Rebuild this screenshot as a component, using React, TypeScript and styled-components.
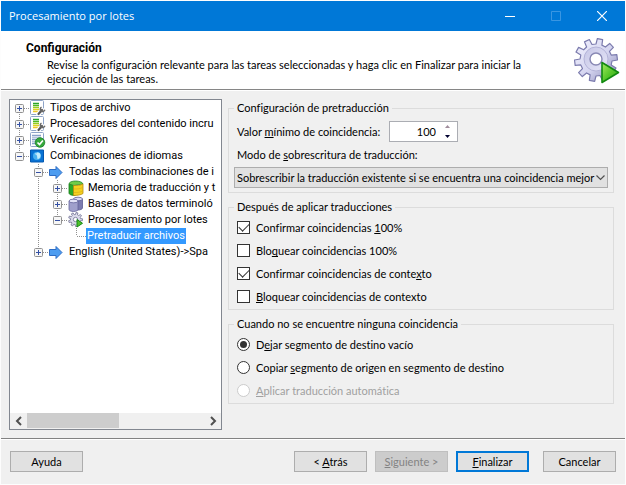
import React from "react";
import styled, { createGlobalStyle, css } from "styled-components";

const GlobalStyle = createGlobalStyle`
  * { box-sizing: border-box; }
  html, body { margin: 0; background: #fdfdfd; }
  body, button, input, select {
    font-family: Lato, "Liberation Sans", sans-serif;
    font-size: 11px;
    font-variant-ligatures: none;
    color: #000;
  }
  u { text-decoration-skip-ink: none; }
`;

const Window = styled.main`
  display: flex;
  flex-direction: column;
  min-height: 100vh;
  padding: 1px;
`;

const TitleBar = styled.header`
  display: flex;
  align-items: center;
  height: 30px;
  padding-left: 8px;
  background: #0078d7;
  color: #fff;
`;

const Title = styled.h1`
  flex: 1;
  margin: 0;
  font: 400 11px/16px "Open Sans", "Noto Sans", sans-serif;
`;

const CaptionButton = styled.button`
  display: grid;
  place-items: center;
  width: 46px;
  height: 30px;
  padding: 0;
  border: 0;
  background: transparent;
  color: #fff;

  &:disabled { color: #3a96e2; }
`;

const Banner = styled.section`
  display: flex;
  justify-content: space-between;
  height: 59px;
  padding: 7px 5px 0 25px;
  background: #fff;
  border-bottom: 1px solid #868686;
`;

const BannerText = styled.div`
  padding-top: 3px;
`;

const BannerTitle = styled.h2`
  margin: 0 0 3px;
  font: 700 12px/14px Roboto, "Liberation Sans", sans-serif;
`;

const BannerNote = styled.p`
  max-width: 510px;
  margin: 0;
  padding-left: 21px;
  line-height: 14px;
`;

const Content = styled.div`
  display: grid;
  grid-template-columns: 213px minmax(0, 1fr);
  flex: 1;
  gap: 6px;
  padding: 8px 11px 8px 8px;
  background: #f0f0f0;
  border-top: 1px solid #fff;
`;

const TreePanel = styled.nav`
  display: flex;
  flex-direction: column;
  overflow: hidden;
  border: 1px solid #828790;
  background: #fff;
`;

const TreeList = styled.ul`
  flex: 1;
  margin: 0;
  padding: 0;
  list-style: none;
  font-family: Roboto, "Liberation Sans", sans-serif;
`;

const TreeRow = styled.li`
  display: flex;
  align-items: center;
  height: 16px;
  white-space: nowrap;
`;

const TreeIcon = styled.svg`
  flex: none;
  width: 16px;
  height: 16px;
  margin: 0 3px 0 1px;
`;

const TreeLabel = styled.span<{ $selected?: boolean }>`
  padding: 0 1px;
  line-height: 16px;
  ${(p) =>
    p.$selected &&
    css`
      background: #3399ff;
      color: #fff;
    `}
`;

const GuideCell = styled.svg`
  flex: none;
  width: 19px;
  height: 16px;
`;

const ScrollBar = styled.div`
  display: flex;
  height: 16px;
  background: #f0f0f0;
`;

const ScrollButton = styled.button`
  display: grid;
  place-items: center;
  width: 17px;
  height: 16px;
  padding: 0;
  border: 0;
  background: transparent;
`;

const ScrollTrack = styled.div`
  flex: 1;
  padding-bottom: 1px;
`;

const ScrollThumb = styled.div`
  width: 52%;
  height: 100%;
  background: #cdcdcd;
`;

const Settings = styled.form`
  display: flex;
  flex-direction: column;
  gap: 6px;
  padding-top: 1px;
`;

const Group = styled.fieldset<{ $roomy?: boolean }>`
  min-width: 0;
  margin: 0;
  padding: ${(p) => (p.$roomy ? "5px 5px 4px" : "1px 5px")};
  border: 1px solid #dcdcdc;
`;

const Legend = styled.legend`
  padding: 0 3px;
  line-height: 16px;
`;

const Field = styled.div`
  display: flex;
  align-items: center;
  height: 21px;
  padding-left: 3px;
`;

const FieldLabel = styled.label`
  flex: 0 0 152px;
`;

const BlockLabel = styled.label`
  display: block;
  margin: 5px 0 4px;
  padding-left: 3px;
  line-height: 16px;
`;

const Spinner = styled.div`
  display: flex;
  width: 69px;
  height: 21px;
  border: 1px solid #abadb3;
  background: #fff;
`;

const SpinnerInput = styled.input`
  flex: 1;
  min-width: 0;
  padding: 0 2px 0 0;
  border: 0;
  background: transparent;
  text-align: right;
`;

const SpinnerButtons = styled.div`
  display: flex;
  flex-direction: column;
  width: 19px;
`;

const SpinnerButton = styled.button`
  display: grid;
  place-items: center;
  flex: 1;
  min-height: 0;
  padding: 0;
  border: 0;
  background: transparent;
`;

const Dropdown = styled.div`
  display: grid;
  align-items: center;

  & > * { grid-area: 1 / 1; }
`;

const Select = styled.select`
  appearance: none;
  width: 100%;
  height: 21px;
  padding: 0 12px 0 2px;
  border: 1px solid #adadad;
  border-radius: 0;
  background: #e1e1e1;
`;

const Chevron = styled.svg`
  justify-self: end;
  margin-right: 3px;
  pointer-events: none;
`;

const Choice = styled.label<{ $disabled?: boolean }>`
  display: flex;
  align-items: center;
  gap: 6px;
  height: 23px;
  padding-left: 3px;
  color: ${(p) => (p.$disabled ? "#a0a0a0" : "#000")};
`;

const CheckBox = styled.input`
  appearance: none;
  display: grid;
  place-items: center;
  width: 13px;
  height: 13px;
  margin: 0;
  border: 1px solid #333;
  background: #fff;

  &:checked::before {
    content: "";
    width: 9px;
    height: 5px;
    margin-bottom: 3px;
    border: solid #333;
    border-width: 0 0 1px 1px;
    transform: rotate(-45deg);
  }
`;

const Radio = styled.input`
  appearance: none;
  display: grid;
  place-items: center;
  width: 13px;
  height: 13px;
  margin: 0;
  border: 1px solid #333;
  border-radius: 50%;
  background: #fff;

  &:checked::before {
    content: "";
    width: 7px;
    height: 7px;
    border-radius: 50%;
    background: #333;
  }
  &:disabled { border-color: #ccc; }
`;

const Footer = styled.footer`
  display: flex;
  gap: 8px;
  padding: 12px 9px;
  background: #f0f0f0;
  border-top: 1px solid #828282;
  box-shadow: inset 0 1px #fff;
`;

const Button = styled.button<{ $primary?: boolean; $push?: "right" | "left" }>`
  width: 73px;
  height: 21px;
  padding: 0;
  border: ${(p) => (p.$primary ? "2px solid #0078d7" : "1px solid #adadad")};
  background: #e1e1e1;
  margin-right: ${(p) => (p.$push === "right" ? "auto" : "0")};
  margin-left: ${(p) => (p.$push === "left" ? "6px" : "0")};

  &:disabled {
    border-color: #bfbfbf;
    background: #ccc;
    color: #838383;
  }
`;

function gearPath(c: number, outer: number, inner: number, teeth: number) {
  const points: string[] = [];
  const step = (Math.PI * 2) / teeth;
  for (let i = 0; i < teeth; i++) {
    const a = i * step - Math.PI / 2 + step * 0.3;
    [
      [-0.3, inner],
      [-0.2, outer],
      [0.2, outer],
      [0.3, inner],
    ].forEach(([k, r]) => {
      points.push(`${(c + Math.cos(a + k * step) * r).toFixed(2)} ${(c + Math.sin(a + k * step) * r).toFixed(2)}`);
    });
  }
  return `M${points.join("L")}Z`;
}

const GearPlay = () => (
  <svg width="46" height="46" viewBox="0 0 46 46" aria-hidden="true">
    <defs>
      <linearGradient id="metal" x1="0" y1="0" x2="1" y2="1">
        <stop offset="0" stopColor="#f4f4fe" />
        <stop offset=".55" stopColor="#d4d4f0" />
        <stop offset="1" stopColor="#8484b0" />
      </linearGradient>
      <linearGradient id="ring" x1="0" y1="0" x2="1" y2="1">
        <stop offset="0" stopColor="#c6c6e6" />
        <stop offset="1" stopColor="#e6e6f8" />
      </linearGradient>
      <linearGradient id="play" x1="0" y1="0" x2="1" y2="1">
        <stop offset="0" stopColor="#a4e860" />
        <stop offset=".5" stopColor="#58c82c" />
        <stop offset="1" stopColor="#2ca010" />
      </linearGradient>
    </defs>
    <path d={gearPath(22, 21.5, 16, 10)} fill="url(#metal)" stroke="#7c7cae" strokeWidth="1.2" strokeLinejoin="round" />
    <circle cx="22" cy="21" r="12" fill="url(#ring)" stroke="#b4b4d8" />
    <circle cx="22" cy="21" r="6" fill="#fff" stroke="#8888b4" strokeWidth="1.4" />
    <path d="M28 24.5v20L44.500 34.500Z" fill="url(#play)" stroke="#128a10" strokeWidth="1.6" strokeLinejoin="round" />
  </svg>
);

type IconKind = "file" | "check" | "combo" | "arrow" | "memory" | "base" | "gear";

const DocumentPage = ({ lines, x, w }: { lines: string[]; x: number; w: number }) => (
  <>
    <rect x=".5" y=".5" width="13" height="14" rx="1" fill="#fff" stroke="#8ea4c8" />
    {lines.map((color, i) => (
      <path key={i} d={`M${x} ${3.5 + i * 2}h${w}`} stroke={color} strokeWidth="1.5" />
    ))}
  </>
);

const Drum = ({ x, y, h, side, top, edge }: { x: number; y: number; h: number; side: string; top: string; edge: string }) => (
  <>
    <path
      d={`M${x} ${y}v${h}c0 1 2 2 4.500 2s4.500-1 4.500-2v-${h}z`}
      fill={side}
      stroke={edge}
      strokeWidth=".8"
    />
    <ellipse cx={x + 4.5} cy={y} rx="4.5" ry="1.8" fill={top} stroke={edge} strokeWidth=".8" />
  </>
);

const iconArt: Record<IconKind, React.ReactNode> = {
  file: (
    <>
      <DocumentPage x={3} w={6} lines={["#28a428", "#50b820", "#98cc20", "#e0d020", "#f0c828"]} />
      <path d="m8.500 14 3.500-4" stroke="#fff" strokeWidth="4.500" strokeLinecap="round" />
      <path d="m8.500 14 3.500-4" stroke="#585858" strokeWidth="2.200" strokeLinecap="round" />
      <path d="M11.500 7.200a2.300 2.300 0 1 0 3.300 2.600" fill="none" stroke="#686868" strokeWidth="1.500" />
    </>
  ),
  check: (
    <>
      <DocumentPage x={2} w={9} lines={["#88a0c8", "#b4c4dc", "#88a0c8", "#b4c4dc", "#88a0c8"]} />
      <circle cx="10" cy="10.500" r="4.800" fill="#36a83c" stroke="#168024" strokeWidth=".8" />
      <path d="m7.500 10.500 2 2 3.400-4" fill="none" stroke="#fff" strokeWidth="1.7" />
    </>
  ),
  combo: (
    <>
      <path d="M.5 2h13v12H.5z" fill="#0872d4" stroke="#0458b0" />
      <circle cx="7" cy="8" r="4" fill="#48b0f0" />
      <path d="M6.500 5c2-1 4 0 4 2.500s-2 4-3 3.500z" fill="#c4ecfc" />
      <path d="M5 5.500h1.500v2z" fill="#fff" />
    </>
  ),
  arrow: (
    <path d="M.5 5.500h6.500V2.500L13 8.500l-6 6v-3H.5z" fill="#4c9cf0" stroke="#2c6cc4" strokeLinejoin="round" />
  ),
  memory: (
    <>
      <path d="M1 4v9c0 2 4 2.500 6 2.500V5z" fill="#28a828" stroke="#147814" strokeWidth=".8" />
      <path d="M1 4c0-4 13-4 14 0L6 5.500z" fill="#70cc48" stroke="#24882c" strokeWidth=".8" />
      <path d="M5.500 5.500c3 0 7 0 9.500-1.500v9.500c-2 1.500-6 2-9.500 2z" fill="#f4d020" stroke="#b88c10" strokeWidth=".8" />
      <path d="M6 9c3 0 6 0 8.500-1.500M6 12.500c3 0 6 0 8.500-1.500" fill="none" stroke="#d8b018" strokeWidth=".7" />
    </>
  ),
  base: (
    <>
      <Drum x={5.500} y={3} h={9} side="#7c7cb0" top="#dcdcf4" edge="#5c5c94" />
      <Drum x={1} y={5} h={8.500} side="#a0a0cc" top="#e4e4f8" edge="#64649c" />
    </>
  ),
  gear: (
    <>
      <path d={gearPath(7.5, 7, 5, 9)} fill="#dcdcec" stroke="#7c7c9c" strokeWidth=".9" />
      <circle cx="7.500" cy="7.500" r="2.200" fill="#fff" stroke="#8888a8" />
      <path d="M9 7.500v7.500l5.500-3.700z" fill="#50c02c" stroke="#148a14" />
    </>
  ),
};

type Guide = "blank" | "line" | "plus" | "plusFirst" | "plusLast" | "minus" | "minusLast" | "end";

const GuideGlyph = ({ kind }: { kind: Guide }) => {
  const up = kind !== "blank" && kind !== "plusFirst";
  const down = ["line", "plus", "plusFirst", "minus"].includes(kind);
  const boxed = kind.startsWith("plus") || kind.startsWith("minus");
  const branch = boxed || kind === "end";
  return (
    <GuideCell viewBox="0 0 19 16" aria-hidden="true">
      <g stroke="#909090" strokeDasharray="1 1" fill="none">
        {up && <path d="M9.500 0v8" />}
        {down && <path d="M9.500 8v8" />}
        {branch && <path d="M10 8.500h9" />}
      </g>
      {boxed && (
        <>
          <rect x="5.500" y="4.500" width="8" height="8" rx="1" fill="#f6f6f6" stroke="#919191" />
          <path d={kind.startsWith("plus") ? "M7 8.500h5M9.500 6v5" : "M7 8.500h5"} stroke="#3450a4" />
        </>
      )}
    </GuideCell>
  );
};

const treeItems: { label: string; guides: Guide[]; icon?: IconKind }[] = [
  { label: "Tipos de archivo", guides: ["plusFirst"], icon: "file" },
  { label: "Procesadores del contenido incru", guides: ["plus"], icon: "file" },
  { label: "Verificación", guides: ["plus"], icon: "check" },
  { label: "Combinaciones de idiomas", guides: ["minusLast"], icon: "combo" },
  { label: "Todas las combinaciones de i", guides: ["blank", "minus"], icon: "arrow" },
  { label: "Memoria de traducción y t", guides: ["blank", "line", "plus"], icon: "memory" },
  { label: "Bases de datos terminoló", guides: ["blank", "line", "plus"], icon: "base" },
  { label: "Procesamiento por lotes", guides: ["blank", "line", "minusLast"], icon: "gear" },
  { label: "Pretraducir archivos", guides: ["blank", "line", "blank", "end"] },
  { label: "English (United States)->Spa", guides: ["blank", "plusLast"], icon: "arrow" },
];

const Arrow = ({ d }: { d: string }) => (
  <svg width="8" height="10" viewBox="0 0 8 10" aria-hidden="true">
    <path d={d} fill="none" stroke="#505050" strokeWidth="2" />
  </svg>
);

export default function App() {
  return (
    <>
      <GlobalStyle />
      <Window>
        <TitleBar>
          <Title>Procesamiento por lotes</Title>
          <CaptionButton aria-label="Minimizar">
            <svg width="10" height="10"><path d="M0 5.500h10" stroke="currentColor" /></svg>
          </CaptionButton>
          <CaptionButton aria-label="Maximizar" disabled>
            <svg width="10" height="10"><path d="M.5.5h9v9h-9z" fill="none" stroke="currentColor" /></svg>
          </CaptionButton>
          <CaptionButton aria-label="Cerrar">
            <svg width="10" height="10"><path d="m0 0 10 10M10 0 0 10" stroke="currentColor" strokeWidth="1.200" /></svg>
          </CaptionButton>
        </TitleBar>
        <Banner>
          <BannerText>
            <BannerTitle>Configuración</BannerTitle>
            <BannerNote>
              Revise la configuración relevante para las tareas seleccionadas y haga clic en Finalizar para iniciar la
              ejecución de las tareas.
            </BannerNote>
          </BannerText>
          <GearPlay />
        </Banner>
        <Content>
          <TreePanel aria-label="Tareas">
            <TreeList>
              {treeItems.map((item) => (
                <TreeRow key={item.label}>
                  {item.guides.map((kind, i) => (
                    <GuideGlyph key={i} kind={kind} />
                  ))}
                  {item.icon && (
                    <TreeIcon viewBox="0 0 16 16" aria-hidden="true">{iconArt[item.icon]}</TreeIcon>
                  )}
                  <TreeLabel $selected={!item.icon}>{item.label}</TreeLabel>
                </TreeRow>
              ))}
            </TreeList>
            <ScrollBar>
              <ScrollButton aria-label="Izquierda"><Arrow d="M6 1 2 5l4 4" /></ScrollButton>
              <ScrollTrack><ScrollThumb /></ScrollTrack>
              <ScrollButton aria-label="Derecha"><Arrow d="m2 1 4 4-4 4" /></ScrollButton>
            </ScrollBar>
          </TreePanel>
          <Settings>
            <Group $roomy>
              <Legend>Configuración de pretraducción</Legend>
              <Field>
                <FieldLabel htmlFor="minimum">Valor <u>m</u>ínimo de coincidencia:</FieldLabel>
                <Spinner>
                  <SpinnerInput id="minimum" defaultValue="100" />
                  <SpinnerButtons>
                    <SpinnerButton type="button" aria-label="Aumentar">
                      <svg width="5" height="3"><path d="M0 3h5L2.500 0z" fill="#a08c9c" /></svg>
                    </SpinnerButton>
                    <SpinnerButton type="button" aria-label="Reducir">
                      <svg width="5" height="3"><path d="M0 0h5L2.500 3z" fill="#000030" /></svg>
                    </SpinnerButton>
                  </SpinnerButtons>
                </Spinner>
              </Field>
              <BlockLabel htmlFor="mode">Modo de <u>s</u>obrescritura de traducción:</BlockLabel>
              <Dropdown>
                <Select id="mode">
                  <option>Sobrescribir la traducción existente si se encuentra una coincidencia mejor</option>
                </Select>
                <Chevron width="9" height="6"><path d="m.5.5 4 4 4-4" fill="none" stroke="#505050" strokeWidth="1.200" /></Chevron>
              </Dropdown>
            </Group>
            <Group>
              <Legend>Después de aplicar traducciones</Legend>
              <Choice><CheckBox type="checkbox" defaultChecked /><span>Confirmar coincidencias <u>1</u>00%</span></Choice>
              <Choice><CheckBox type="checkbox" /><span>Blo<u>q</u>uear coincidencias 100%</span></Choice>
              <Choice><CheckBox type="checkbox" defaultChecked /><span>Confirmar coincidencias de conte<u>x</u>to</span></Choice>
              <Choice><CheckBox type="checkbox" /><span><u>B</u>loquear coincidencias de contexto</span></Choice>
            </Group>
            <Group>
              <Legend>Cuando no se encuentre ninguna coincidencia</Legend>
              <Choice><Radio type="radio" name="nomatch" defaultChecked /><span>D<u>e</u>jar segmento de destino vacío</span></Choice>
              <Choice><Radio type="radio" name="nomatch" /><span>Copiar <u>s</u>egmento de origen en segmento de destino</span></Choice>
              <Choice $disabled><Radio type="radio" name="nomatch" disabled /><span><u>A</u>plicar traducción automática</span></Choice>
            </Group>
          </Settings>
        </Content>
        <Footer>
          <Button $push="right">Ayuda</Button>
          <Button>&lt; <u>A</u>trás</Button>
          <Button disabled><u>S</u>iguiente &gt;</Button>
          <Button $primary><u>F</u>inalizar</Button>
          <Button $push="left">Cancelar</Button>
        </Footer>
      </Window>
    </>
  );
}
